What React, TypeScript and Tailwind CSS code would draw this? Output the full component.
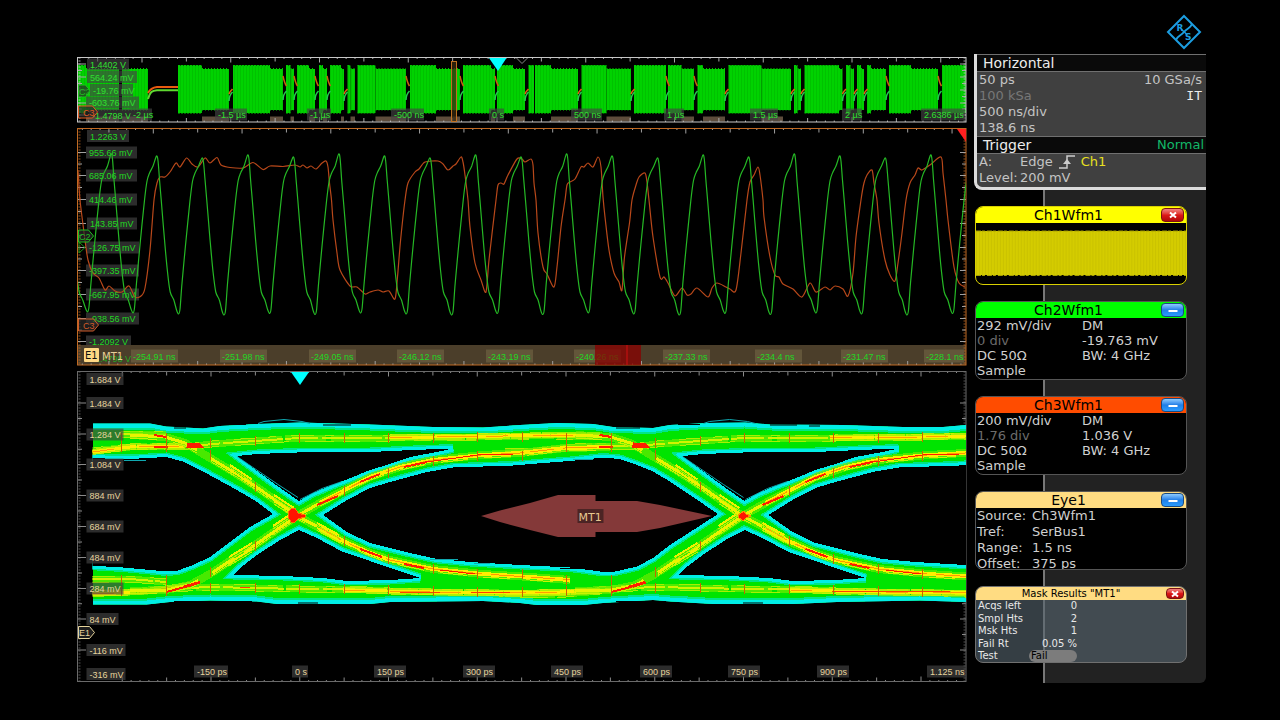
import type { ReactNode } from "react";

type Point = [number, number];

const toPath = (pts: Point[]) => "M" + pts.map(([x, y]) => `${x} ${y}`).join("L");
const shift = (pts: Point[], dx: number, dy = 0): Point[] => pts.map(([x, y]) => [x + dx, y + dy]);

/* Catmull-Rom spline through the points, as cubic segments. */
const toCurve = (pts: Point[]) => {
  let d = `M${pts[0][0]} ${pts[0][1]}`;
  for (let i = 0; i < pts.length - 1; i++) {
    const p0 = pts[Math.max(i - 1, 0)];
    const p1 = pts[i];
    const p2 = pts[i + 1];
    const p3 = pts[Math.min(i + 2, pts.length - 1)];
    const c = [p1[0] + (p2[0] - p0[0]) / 7, p1[1] + (p2[1] - p0[1]) / 7, p2[0] - (p3[0] - p1[0]) / 7, p2[1] - (p3[1] - p1[1]) / 7];
    d += `C${c.map((v) => v.toFixed(1)).join(" ")} ${p2[0]} ${p2[1]}`;
  }
  return d;
};

/* ---------- shared plot pieces ---------- */

function AxisLabel({ x, y, w, text, color }: { x: number; y: number; w: number; text: string; color: string }) {
  return (
    <g>
      <rect x={x - 3} y={y - 6} width={w} height={12} fill="#444444" fillOpacity={0.65} />
      <text x={x} y={y + 3.5} fill={color} className="font-['Liberation_Sans',sans-serif] text-[9px]">
        {text}
      </text>
    </g>
  );
}

type FrameProps = { top: number; bottom: number; color: string; tick: string; first: number; major: number[] };

function Frame({ top, bottom, color, tick, first, major }: FrameProps) {
  const step = 88.75;
  const minor: ReactNode[] = [];
  for (let i = -10; i < 110; i++) {
    const x = first + (i * step) / 10;
    if (x < 80 || x > 964) continue;
    const len = i % 10 === 0 ? 5 : i % 5 === 0 ? 4 : 1.5;
    minor.push(<path key={i} d={`M${x} ${top}v${len}M${x} ${bottom}v${-len}`} stroke={tick} />);
  }
  return (
    <g fill="none" strokeWidth={1}>
      {minor}
      <path d={`M79.500 ${top}V${bottom}M964.500 ${top}V${bottom}`} stroke={color} strokeWidth={2} strokeDasharray="1 2" opacity={0.8} />
      {major.map((y) => (
        <path key={y} d={`M78 ${y}h8M966 ${y}h-6`} stroke={tick} />
      ))}
      {major.slice(1).map((y, i) => (
        <path key={y} d={`M78 ${(y + major[i]) / 2}h4M966 ${(y + major[i]) / 2}h-4`} stroke={tick} />
      ))}
      <rect x={77.5} y={top} width={888.5} height={bottom - top} stroke={color} />
    </g>
  );
}

function Tag({ y, w, text, color }: { y: number; w: number; text: string; color: string }) {
  return (
    <g>
      <path d={`M78.500 ${y - 6}h${w - 5}l5 6l-5 6h${5 - w}z`} fill="#2a2a2a" fillOpacity={0.7} stroke={color} />
      <text x={w > 16 ? 83 : 79} y={y + 3.5} fill={color} className="font-['Liberation_Sans',sans-serif] text-[9px]">
        {text}
      </text>
    </g>
  );
}

/* ---------- acquisition overview ---------- */

const TALL: Point[] = [
  [78, 86], [178, 202], [233, 270], [286, 290.5], [297, 309], [319, 323], [330, 341], [347.5, 350.5],
  [357.500, 375.5], [410, 436], [463, 491], [497, 513], [528.5, 534], [535, 551], [581.5, 606.5], [634, 666],
  [668, 681.5], [697.5, 703], [728.5, 761.5], [794, 797.5], [804.5, 839], [846, 850.5], [857, 861],
  [867, 871], [889, 911], [942, 966],
];
const SHORT: Point[] = [
  [86, 119], [122, 148], [202, 229], [270, 283], [290.5, 294], [309, 315], [323, 327], [341, 344],
  [350.5, 355], [375.5, 406], [436, 460], [491, 495], [513, 525], [551, 578], [606.5, 631], [681.5, 694],
  [703, 725], [761.5, 791], [797.5, 801], [839, 842.5], [850.5, 854], [861, 864], [871, 886], [911, 938],
];
const FALLS = [283, 294, 315, 327, 406, 460, 495, 666, 694, 886, 938];
const RISES = [229, 344, 525, 578, 631, 725, 791, 801, 842.5, 854, 864];

const OVERVIEW_TIMES: [string, number, number][] = [
  ["-2 µs", 133, 22], ["-1.5 µs", 218, 32], ["-1 µs", 310, 24], ["-500 ns", 394, 33], ["0 s", 492, 15],
  ["500 ns", 574, 31], ["1 µs", 667, 20], ["1.5 µs", 753, 28], ["2 µs", 845, 20], ["2.6386 µs", 924, 44],
];

function OverviewPlot() {
  const green = "#2fe02f";
  return (
    <svg viewBox="77 56 890 67" className="block w-full" role="img" aria-label="Acquisition overview">
      <defs>
        <pattern id="burst" width="3" height="10" patternUnits="userSpaceOnUse">
          <rect width="3" height="10" fill="#00d200" />
          <rect width="1" height="10" fill="#00c200" />
        </pattern>
      </defs>
      {SHORT.filter(([a]) => a < 783).map(([a, b]) => (
        <rect key={a} x={a} y={116.5} width={Math.min(b, 783) - a} height={5} fill="#5e4d3c" />
      ))}
      {TALL.map(([a, b]) => (
        <g key={a}>
          <rect x={a} y={65.5} width={b - a} height={47.5} fill="url(#burst)" />
          <path d={`M${a} 65.500H${b}M${a} 113H${b}`} stroke="#00c800" strokeDasharray="2 1" />
        </g>
      ))}
      {SHORT.map(([a, b]) => (
        <g key={a}>
          <rect x={a} y={69} width={b - a} height={41} fill="url(#burst)" />
          <path d={`M${a} 68.500H${b}M${a} 110H${b}`} stroke="#00c800" strokeDasharray="1 2" />
        </g>
      ))}
      <g fill="none" strokeWidth={1.5}>
        <path d="M148 93c2-4 4-5.500 9-6h21" stroke="#e85a10" strokeWidth={2} />
        <path d="M148 99c2-7 4-8.500 9-8.800h21" stroke="#5fd930" strokeWidth={2} />
        {FALLS.map((x) => (
          <g key={x}>
            <path d={`M${x} 76c1 5 1.500 7 3.500 10`} stroke="#c86010" />
            <path d={`M${x} 100c0-5 1.500-7 3.500-9`} stroke="#25c850" />
          </g>
        ))}
        {RISES.map((x) => (
          <g key={x}>
            <path d={`M${x} 94c1-3 2-3 3.500-5`} stroke="#e06010" />
            <path d={`M${x} 101c0-5 1.500-7 3.500-9`} stroke="#25c850" />
          </g>
        ))}
      </g>
      <Frame top={57.5} bottom={122} color="#c8c8c8" tick="#a8a8a8" first={142} major={[64, 77, 90, 103, 115]} />
      <path d="M516.500 58l5.500 5.500l5.500-5.500" fill="none" stroke="#888888" />
      <path d="M489 58h17.500l-8.500 13z" fill="#00ffff" />
      <rect x={451.5} y={61.5} width={5} height={60} fill="#3a2a10" fillOpacity={0.75} stroke="#c07020" />
      <Tag y={91} w={12} text="C2" color="#1fbf1f" />
      <AxisLabel x={90} y={64.5} w={42} text="1.4402 V" color={green} />
      <AxisLabel x={90} y={77} w={50} text="564.24 mV" color={green} />
      <AxisLabel x={93} y={90} w={43} text="-19.76 mV" color={green} />
      <AxisLabel x={89} y={102.5} w={53} text="-603.76 mV" color={green} />
      <AxisLabel x={92} y={115} w={41} text="-1.4798 V" color={green} />
      <Tag y={112} w={19} text="C3" color="#e05a20" />
      {OVERVIEW_TIMES.map(([t, x, w]) => (
        <AxisLabel key={t} x={x} y={114.5} w={w} text={t} color={green} />
      ))}
    </svg>
  );
}

/* ---------- zoomed waveform ---------- */

const CLOCK_CYCLE: Point[] = [
  [-12, 200], [-9.500, 181], [-7, 173], [-3.5, 166], [0, 156], [1.5, 161], [3, 180], [4.7, 200], [8, 240],
  [11, 272], [13.7, 292], [17.3, 300], [20, 310], [22, 314], [23.5, 309], [25.5, 283], [29, 245],
];
const CLOCK: Point[] = Array.from({ length: 21 }, (_, i) => i - 1).flatMap((i) => {
  const wobble = ((i * 7) % 5) - 2;
  return CLOCK_CYCLE.map(([x, y]): Point => [111 + 45.53 * i + x, y < 165 ? y + wobble : y > 305 ? y + wobble / 2 : y]);
});

const DATA: Point[] = [
  [78, 170], [80, 200], [85, 240], [88, 260], [93, 273], [99, 278], [105, 290], [109, 286], [115, 291],
  [122, 292], [129, 286], [135, 297], [141, 296], [145, 288], [150, 250], [154, 200], [157, 183], [160, 177],
  [165, 177], [170, 172], [176, 163], [180, 167], [186.5, 158], [192, 164], [198, 167], [205, 158],
  [210, 163], [217, 157.500], [221, 165], [230, 167.5], [243, 168], [253, 162.5], [263, 169.5], [270, 166],
  [283, 166.5], [295, 165], [300, 167], [303, 165], [307, 168], [311, 166], [316, 169], [322, 163],
  [326, 161], [328, 167], [329.5, 183], [331.5, 200], [333, 220], [337, 253], [340, 270], [350, 286],
  [357, 287], [365, 294], [370, 292], [378, 290], [383, 292], [389, 291], [395, 299], [397.5, 277],
  [400.6, 240], [405, 200], [408, 183], [415, 172], [419, 169], [425, 162], [438, 161], [443, 164],
  [448, 170], [453, 166], [456, 164], [461, 157], [463, 162], [465, 175], [468, 200], [470, 227],
  [475, 263], [481, 280], [486, 292], [489, 260], [496, 200], [498, 185], [501, 183], [504, 184],
  [508, 175], [517, 159], [522, 159], [525, 162], [531, 159], [533, 165], [534, 183], [536, 200],
  [538, 233], [543, 267], [547, 274], [554, 287], [557, 267], [561, 227], [565, 200], [567, 185],
  [570, 182], [575, 179], [581, 167], [584, 167], [588, 163], [593, 167], [598, 157], [601, 167],
  [603, 197], [605, 217], [609, 250], [614, 273], [619, 282], [622, 290], [624.5, 257], [629.5, 223],
  [632, 200], [636, 185], [639, 177], [645, 173], [647, 182], [649, 200], [653, 237], [660, 277],
  [664, 277], [668, 283], [675, 296], [682, 288], [687, 295], [691, 294], [697, 288], [708, 297],
  [712, 288], [717, 283], [726, 287], [730, 289], [736, 290], [741, 253], [747, 200], [750, 182],
  [754, 175], [758, 167], [760, 175], [763, 200], [764, 217], [770, 257], [775, 275], [779, 277],
  [783, 284], [793, 289], [802, 297], [810, 283], [816, 292], [825, 287], [830, 290], [835, 286],
  [843, 289], [848, 296], [853, 273], [856, 237], [861, 200], [864, 183], [867, 175], [872, 170],
  [874, 183], [877, 200], [879, 223], [885, 260], [890, 275], [895, 281], [898, 263], [902, 233],
  [906, 200], [910, 183], [915, 175], [918, 168], [922, 170], [930, 165], [941, 157], [943, 173],
  [946, 200], [948, 220], [954, 267], [959, 283], [965, 287],
];

const ZOOM_LEVELS: [string, number, number, number][] = [
  ["1.2263 V", 90, 136, 42], ["955.66 mV", 89, 152.5, 51], ["685.06 mV", 89, 175.5, 51],
  ["414.46 mV", 89, 199.5, 51], ["143.85 mV", 90, 223.5, 50], ["-126.75 mV", 89, 247.5, 53],
  ["-397.35 mV", 89, 270.5, 53], ["-667.95 mV", 89, 294.5, 53], ["-938.56 mV", 89, 318.5, 53],
  ["-1.2092 V", 89, 341.5, 45],
];
const ZOOM_TIMES: [string, number][] = [
  ["-254.91 ns", 133], ["-251.98 ns", 222], ["-249.05 ns", 311], ["-246.12 ns", 399], ["-243.19 ns", 488],
  ["-240.26 ns", 576], ["-237.33 ns", 665], ["-234.4 ns", 757], ["-231.47 ns", 843], ["-228.1 ns", 926],
];

function ZoomPlot() {
  const green = "#22d822";
  return (
    <svg viewBox="77 127 890 239" className="block w-full" role="img" aria-label="Zoomed waveforms of channels 2 and 3">
      <defs>
        <clipPath id="zoomArea">
          <rect x="78" y="129" width="888" height="236" />
        </clipPath>
      </defs>
      {ZOOM_LEVELS.map(([t, x, y, w]) => (
        <AxisLabel key={t} x={x} y={y} w={w} text={t} color={green} />
      ))}
      <rect x={78} y={345} width={888} height={20} fill="#4b3e2a" />
      <text x={92} y={362} fill="#22a822" className="font-['Liberation_Sans',sans-serif] text-[9px]">-1.4798 V</text>
      <Frame
        top={128.5}
        bottom={365}
        color="#c06a24"
        tick="#a0a0a0"
        first={153.3}
        major={[152.5, 175.5, 199.5, 223.5, 247.5, 270.5, 294.5, 318.5, 341.5]}
      />
      <g clipPath="url(#zoomArea)" fill="none" strokeLinejoin="round">
        <path d={toCurve(DATA)} stroke="#b8481a" strokeWidth={1.2} />
        <path d={toCurve(CLOCK)} stroke="#25b825" strokeWidth={1.2} />
        <path d="M957 129h9v13z" fill="#ff2020" />
      </g>
      <path d="M79 242v11l6-5.500z" fill="none" stroke="#159015" />
      <Tag y={236} w={15} text="C2" color="#1fbf1f" />
      <Tag y={325} w={20} text="C3" color="#d05a28" />
      {ZOOM_TIMES.map(([t, x]) => (
        <g key={t}>
          <rect x={x - 2} y={349.5} width={Math.min(47, 966 - x)} height={13} fill="#63563a" />
          <text x={x} y={359.500} fill={green} className="font-['Liberation_Sans',sans-serif] text-[9px]">{t}</text>
        </g>
      ))}
      <rect x={595} y={345} width={46} height={20} fill="#880000" fillOpacity={0.75} />
      <path d="M627 345v20" stroke="#d01010" />
      <rect x={84} y={348} width={15} height={14} rx={1} fill="#ffd884" />
      <text x={85} y={359} fill="#101010" className="font-['DejaVu_Sans',sans-serif] text-[10px]">E1</text>
      <text x={102} y={359.500} fill="#e8cf98" className="font-['DejaVu_Sans',sans-serif] text-[10px]">MT1</text>
    </svg>
  );
}

/* ---------- eye diagram ---------- */

const UI = 445.5;

const EYE_OUTLINE: Point[] = [
  [92.5, 423.5], [150, 423.5], [166, 426.5], [203, 428.5], [220, 426], [257, 424], [300, 422.5], [370, 424.500],
  [433, 427], [483, 427.5], [520, 425], [557, 423], [593, 424], [613, 427], [653, 428], [670, 425],
  [707, 423], [745, 422.500], [770, 424.5], [843, 425], [903, 427], [943, 427], [966, 425],
  [966, 602], [920, 600.5], [837, 602], [793, 604], [713, 604], [670, 601.5], [653, 600], [603, 603],
  [583, 605], [537, 605], [520, 603], [483, 601], [390, 602], [370, 604], [277, 604], [257, 601.5],
  [210, 600.5], [170, 602], [147, 604.5], [92.5, 604.5],
];
const TOP_EDGE = EYE_OUTLINE.slice(0, 23);
const BOTTOM_EDGE = EYE_OUTLINE.slice(23);

const LEFT_HOLE: Point[] = [
  [80, 458], [130, 459], [166, 457], [183, 461.5], [203, 471.5], [237, 490], [257, 502], [273, 514],
  [250, 527], [230, 542], [210, 557], [193, 565], [178, 570.5], [167, 571.5], [123, 567.5], [80, 565],
];
const TOP_HOLE: Point[] = [
  [237, 456], [257, 454], [297, 452.5], [370, 452], [413, 450], [453, 448.5], [437, 452], [410, 457],
  [390, 464], [370, 470], [353, 477], [330, 486], [313, 493], [299, 501], [283, 490], [257, 471],
];
const BOTTOM_HOLE: Point[] = [
  [299, 530], [317, 538], [343, 552], [370, 561], [390, 568], [420, 578], [390, 580], [347, 581],
  [323, 578], [283, 576], [233, 575], [240, 568], [257, 555], [280, 540],
];
const MAIN_HOLE: Point[] = [
  [323, 515], [347, 500], [370, 488], [390, 482], [427, 472], [453, 467.5], [513, 465.5], [543, 463],
  [570, 461], [603, 457.5], [620, 459], [637, 465], [653, 471.5], [670, 481.5], [690, 495], [718, 514],
  [687, 534], [670, 545], [653, 558], [637, 566.5], [613, 572], [600, 571.5], [570, 567.5], [520, 565],
  [470, 562], [437, 559], [410, 553], [390, 548], [370, 543], [347, 532],
];
const HOLES: Point[][] = [
  LEFT_HOLE, TOP_HOLE, BOTTOM_HOLE, MAIN_HOLE, shift(TOP_HOLE, UI), shift(BOTTOM_HOLE, UI), shift(MAIN_HOLE, UI),
];

const FALLING: Point[] = [
  [130, 435], [165, 437], [185, 443], [205, 455], [230, 470], [255, 486], [275, 500], [297, 516], [320, 528],
  [343, 541], [370, 553], [390, 560], [433, 569], [483, 574], [530, 577], [570, 580],
];
const RISING: Point[] = [
  [130, 591], [166, 590], [190, 585], [210, 574], [230, 561], [255, 545], [275, 531], [297, 516], [320, 503],
  [343, 491], [370, 477], [400, 467], [433, 460], [483, 455], [520, 453], [565, 448], [610, 447],
];
const HIGH: Point[] = [
  [60, 452], [92, 451], [130, 447], [166, 446], [195, 446], [212, 444], [255, 441], [299, 438], [340, 438],
  [390, 438], [433, 437], [477, 437], [530, 436], [566, 436], [600, 436],
];
const LOW: Point[] = [
  [60, 594], [92, 593], [130, 592], [166, 589], [210, 587], [255, 588], [300, 589], [343, 589], [390, 591],
  [433, 592], [477, 592], [520, 594], [566, 594], [600, 591],
];
const TRANSITIONS: Point[][] = [FALLING, RISING, shift(FALLING, UI), shift(RISING, UI)];
const RAILS: Point[][] = [
  HIGH, LOW, shift(HIGH, UI), shift(LOW, UI), [[120, 434], [166, 435]], [[92, 579], [130, 579], [166, 582]],
];
const WARM_RAILS: Point[][] = [
  [[390, 437.5], [477, 436.5], [530, 435.5], [600, 435]],
  [[343, 590], [433, 592], [520, 593], [600, 591]],
  [[830, 438], [922, 437], [966, 436]],
  [[790, 590], [880, 592], [966, 593]],
  [[92, 452], [130, 447], [185, 446]],
  [[92, 594], [140, 592], [190, 585]],
];

const HOT: Point[][] = [
  [[360, 482], [380, 474]], [[404, 467], [427, 462]], [[427, 462], [477, 455], [514, 454]],
  [[360, 549], [382, 557]], [[404, 564], [424, 568]], [[440, 570], [475, 574]],
  [[154, 435], [166, 437]], [[154, 447.500], [168, 446.5]],
  [[166, 592], [185, 587], [200, 582]], [[317, 505], [338, 496]],
];
const TICK_XS = Array.from({ length: 19 }, (_, i) => 121.5 + 44.5 * i);

const railAt = (x: number): number[] => {
  const u = x > 560 ? x - UI : x;
  if (u < 180) return [438, 447, 580, 591];
  if (u < 230) return [443, 455, 572, 588];
  if (u < 280) return [441, 487, 546, 588];
  if (u < 320) return [438, 589];
  if (u < 365) return [438, 491, 541, 589];
  if (u < 410) return [438, 473, 559, 590];
  if (u < 455) return [438, 461, 569, 591];
  return [437, 456, 574, 592];
};

const EYE_LEVELS: [string, number, number][] = [
  ["1.684 V", 379, 37], ["1.484 V", 403, 37], ["1.284 V", 434.5, 37], ["1.084 V", 464.5, 37],
  ["884 mV", 495.500, 37], ["684 mV", 526.5, 37], ["484 mV", 557.5, 37], ["284 mV", 588.5, 37],
  ["84 mV", 619, 32], ["-116 mV", 650, 39], ["-316 mV", 674, 39],
];
const EYE_TIMES: [string, number, number][] = [
  ["-150 ps", 197, 34], ["0 s", 295, 16], ["150 ps", 377, 32], ["300 ps", 466, 32], ["450 ps", 554, 32],
  ["600 ps", 643, 32], ["750 ps", 731, 32], ["900 ps", 820, 32], ["1.125 ns", 930, 38],
];

function EyePlot() {
  const cream = "#e6d49c";
  return (
    <svg viewBox="77 370 890 313" className="block w-full" role="img" aria-label="Eye diagram with mask test MT1">
      <defs>
        <clipPath id="eyeShape">
          <path d={toPath(EYE_OUTLINE) + "Z"} />
        </clipPath>
      </defs>
      <Frame
        top={371.5}
        bottom={681.5}
        color="#6a6a6a"
        tick="#8a8a8a"
        first={211}
        major={[403, 434, 464.5, 495.5, 526.5, 557.5, 588.5, 619, 650]}
      />
      <g clipPath="url(#eyeShape)" shapeRendering="crispEdges">
        <path d={toPath(EYE_OUTLINE) + "Z"} fill="#00e400" />
        <g fill="none" stroke="#00e688" strokeWidth={12}>
          <path d={toPath(TOP_EDGE)} />
          <path d={toPath(BOTTOM_EDGE)} />
          {HOLES.map((h, i) => (
            <path key={i} d={toPath(h) + "Z"} strokeWidth={9} />
          ))}
        </g>
        <g fill="none" stroke="#00eee6" strokeWidth={8}>
          <path d={toPath(TOP_EDGE)} />
          <path d={toPath(BOTTOM_EDGE)} />
          {HOLES.map((h, i) => (
            <path key={i} d={toPath(h) + "Z"} strokeWidth={6} />
          ))}
        </g>
        <g fill="none">
          {RAILS.map((t, i) => (
            <g key={i}>
              <path d={toPath(t)} stroke="#70ec00" strokeWidth={7} strokeDasharray="87 3 41 5" opacity={0.7} />
              <path d={toPath(t)} stroke="#d0f400" strokeWidth={2} strokeDasharray="61 2 33 4 60 3" />
              <path d={toPath(shift(t, 0, 3))} stroke="#a8f000" strokeWidth={1} strokeDasharray="17 16 29 9" />
              <path d={toPath(shift(t, 0, -3))} stroke="#a8f000" strokeWidth={1} strokeDasharray="23 11 9 15" />
            </g>
          ))}
          {WARM_RAILS.map((t, i) => (
            <g key={i}>
              <path d={toPath(t)} stroke="#d8f400" strokeWidth={6} strokeDasharray="44 1 30 1" opacity={0.7} />
              <path d={toPath(t)} stroke="#ffee00" strokeWidth={3} strokeDasharray="44 1 70 1" />
              <path d={toPath(t)} stroke="#ffa000" strokeWidth={1} strokeDasharray="22 25 40 9" />
            </g>
          ))}
          {TRANSITIONS.map((t, i) => (
            <g key={i}>
              <path d={toPath(t)} stroke="#78ec00" strokeWidth={8} opacity={0.6} />
              <path d={toPath(t)} stroke="#e8f400" strokeWidth={3} strokeDasharray="70 16 26 12 60 8 20 6" />
              <path d={toPath(shift(t, 0, 3))} stroke="#c8f400" strokeWidth={1} strokeDasharray="27 16" />
              <path d={toPath(t.slice(8))} stroke="#ffee00" strokeWidth={4} />
              <path d={toPath(t.slice(8))} stroke="#ff9800" strokeWidth={1} strokeDasharray="24 9 34 6" />
            </g>
          ))}
          {[0, UI].map((dx) => (
            <g key={dx}>
              {HOT.map((h, i) => (
                <path key={i} d={toPath(shift(h, dx))} stroke="#ff1c00" strokeWidth={i === 2 || i === 5 ? 1 : 2} />
              ))}
              {[0, 1, 2, 3].map((k) => (
                <path
                  key={k}
                  d={`M${230 + dx} ${465 + k * 2.5}l22 14.500M${274 + dx} ${495 + k * 3}l20 13M${229 + dx} ${557 + k * 3}l23-14M${273 + dx} ${526 + k * 3}l21-14M${317 + dx} ${523 + k * 2.5}l22 12`}
                  stroke={k % 2 ? "#b8f000" : "#f0f000"}
                  strokeWidth={k % 2 ? 1 : 2}
                />
              ))}
              <path d={`M${188 + dx} 443l12 1l3 3h-16z`} fill="#ff1c00" stroke="#ff1c00" />
              <path d={`M${184 + dx} 586l14-4l2 1l-12 4z`} fill="#ff1c00" stroke="#ff1c00" />
            </g>
          ))}
          <path d="M288 512l4-4h3l3 5l7 2v2l-7 2l-3 3h-4l-3-5z" fill="#ff1400" stroke="#ff7000" />
          <path d="M738 515l6-4l2 3l5 2l-5 2l-3 3l-5-4z" fill="#ff1400" stroke="#ff9000" />
          {[[400, 592, 440, 592], [470, 592, 510, 593], [832, 591, 950, 592], [240, 587, 250, 587]].map(([a, b, c, d]) => (
            <path key={a} d={`M${a} ${b}L${c} ${d}`} stroke="#ff4000" strokeWidth={1} />
          ))}
          {TICK_XS.flatMap((x) =>
            railAt(x).map((y) => <path key={`${x}-${y}`} d={`M${x} ${y - 5}v10`} stroke="#c86400" />)
          )}
        </g>
      </g>
      {HOLES.map((h, i) => (
        <path key={i} d={toPath(h) + "Z"} fill="#000000" clipPath="url(#eyeShape)" shapeRendering="crispEdges" />
      ))}
      <g fill="none" stroke="#10a8b0" strokeWidth={1}>
        {[0, UI].map((dx) => (
          <g key={dx}>
            <path d={`M${237 + dx} 456.500l41 28l20 13M${300 + dx} 499.500l22-11l20-7`} />
            <path d={`M${258 + dx} 423.500l6-2l20-2l18 2l8 2`} />
          </g>
        ))}
        <path d="M124 460.500h22M573 459.500h20M430 559.500h28M474 563.500h16" />
      </g>
      <g stroke="#000000" strokeWidth={1}>
        <path d="M174 428h12M230 424.500h16M323 425h28M616 428h24M678 424.500h22M770 425h27M809 426h11M174 601.500h36M231 601.500h21M298 603h20M616 601.500h50M743 603h20M560 568.500h24" />
      </g>
      <path
        d="M481 516L500 510.500L530 503L558 495H595.500V501H637L660 505L712 516L660 528L637 532H595.500V537H558L530 530L500 522Z"
        fill="#843939"
      />
      <rect x={577.5} y={509} width={26} height={14} fill="#4c2424" />
      <text x={578.5} y={520.5} fill="#e8c890" className="font-['DejaVu_Sans',sans-serif] text-[11px]">MT1</text>
      <path d="M291 372h18l-9 13z" fill="#00ffff" />
      {EYE_LEVELS.map(([t, y, w]) => (
        <AxisLabel key={t} x={89.5} y={y} w={w} text={t} color={cream} />
      ))}
      {EYE_TIMES.map(([t, x, w]) => (
        <AxisLabel key={t} x={x} y={671.5} w={w} text={t} color={cream} />
      ))}
      <Tag y={632.5} w={16} text="E1" color={cream} />
    </svg>
  );
}

/* ---------- side panel ---------- */

function Logo() {
  return (
    <svg width="36" height="36" viewBox="0 0 36 36" role="img" aria-label="Rohde and Schwarz" fill="none" stroke="#1c9de0">
      <path d="M18 2L34 18L18 34L2 18Z" strokeWidth="2" />
      <path d="M10 26C12 21 15 22 18 18S24 15 26 10" strokeWidth="2" />
      <path d="M15.500 15.500L21 20.500" strokeWidth="1.500" />
      <text x="10.500" y="16.500" fill="#1c9de0" stroke="none" className="font-['DejaVu_Sans',sans-serif] text-[9px] font-bold">R</text>
      <text x="19" y="26" fill="#1c9de0" stroke="none" className="font-['DejaVu_Sans',sans-serif] text-[9px] font-bold">S</text>
    </svg>
  );
}

function CardButton({ kind, label, small }: { kind: "close" | "minimize"; label: string; small?: boolean }) {
  const tone =
    kind === "close"
      ? "border-[#7a1212] bg-linear-to-b from-[#f08080] via-[#dd1818] to-[#b00808]"
      : "border-[#1a4a80] bg-linear-to-b from-[#8ccbff] via-[#1f7ee6] to-[#2a9cff]";
  const size = small ? "h-[11px] w-[18px]" : "h-[14px] w-[23px]";
  return (
    <button type="button" aria-label={label} className={`flex shrink-0 items-center justify-center rounded-[4px] border ${tone} ${size}`}>
      <svg width="10" height="8" viewBox="0 0 10 8" stroke="#ffffff" strokeWidth="2" aria-hidden="true">
        {kind === "close" ? <path d="M2 1.500l6 5M8 1.500l-6 5" /> : <path d="M0.500 5h9" />}
      </svg>
    </button>
  );
}

type CardProps = { title: string; head: string; border: string; kind: "close" | "minimize"; children: ReactNode };

function Card({ title, head, border, kind, children }: CardProps) {
  return (
    <section className={`flex h-[79px] flex-col overflow-hidden rounded-lg border bg-black ${border}`}>
      <header className={`flex h-4 shrink-0 items-center pr-0.5 text-black ${head}`}>
        <h2 className="flex-1 text-center text-sm leading-4">{title}</h2>
        <CardButton kind={kind} label={`${kind === "close" ? "Close" : "Minimize"} ${title}`} />
      </header>
      {children}
    </section>
  );
}

function ChannelBody({ scale, position, offset }: { scale: string; position: string; offset: string }) {
  return (
    <div className="grid grid-cols-[105px_1fr] px-px text-[13px] leading-[15px] text-[#d0d0d0]">
      <span>{scale}</span>
      <span>DM</span>
      <span className="text-[#6c6c6c]">{position}</span>
      <span>{offset}</span>
      <span>DC 50Ω</span>
      <span>BW: 4 GHz</span>
      <span>Sample</span>
    </div>
  );
}

const EYE_SETTINGS = [["Source:", "Ch3Wfm1"], ["Tref:", "SerBus1"], ["Range:", "1.5 ns"], ["Offset:", "375 ps"]];
const MASK_RESULTS = [["Acqs left", "0"], ["Smpl Hts", "2"], ["Msk Hts", "1"], ["Fail Rt", "0.05 %"]];

function Sidebar() {
  return (
    <aside className="flex w-[232px] shrink-0 flex-col rounded-br-md bg-[linear-gradient(90deg,#000_69px,#777_69px,#777_71px,#222_71px)] font-['DejaVu_Sans',sans-serif]">
      <section className="overflow-hidden rounded-bl-lg border-b-3 border-l-3 border-[#dcdcdc] bg-[#404040] text-[13px] leading-4 text-[#c4c4c4]">
        <h2 className="border-y border-[#707070] bg-[#0a0a0a] pl-1.5 text-sm leading-4 text-[#ececec]">Horizontal</h2>
        <div className="flex justify-between pr-1 pl-0.5">
          <div>
            <p>50 ps</p>
            <p className="text-[#777777]">100 kSa</p>
            <p>500 ns/div</p>
            <p>138.6 ns</p>
          </div>
          <div className="text-right">
            <p>10 GSa/s</p>
            <p className="font-['DejaVu_Sans_Mono',monospace] text-[#ececec]">IT</p>
          </div>
        </div>
        <div className="flex justify-between border-y border-[#707070] bg-[#0a0a0a] pr-0.5 pl-1.5">
          <h2 className="text-sm leading-4 text-[#ececec]">Trigger</h2>
          <span className="text-[#12b868]">Normal</span>
        </div>
        <div className="grid grid-cols-[41px_1fr] pb-px pl-0.5">
          <span>A:</span>
          <span className="flex items-center">
            Edge
            <svg width="16" height="14" viewBox="0 0 16 14" className="mx-1.5" fill="none" stroke="#cccccc" strokeWidth="1.500" aria-label="rising">
              <path d="M0 13h8V1h8" />
              <path d="M4 9l4-5l4 5z" fill="#cccccc" stroke="none" />
            </svg>
            <span className="text-[#e8e020]">Ch1</span>
          </span>
          <span>Level:</span>
          <span>200 mV</span>
        </div>
      </section>

      <div className="mt-4 mb-5 ml-px flex w-[212px] flex-col gap-4">
        <Card title="Ch1Wfm1" head="bg-[#ffff00]" border="border-[#d8d000]" kind="close">
          <svg viewBox="0 0 211 61" preserveAspectRatio="none" className="min-h-0 flex-1" role="img" aria-label="Channel 1 preview">
            <defs>
              <pattern id="ch1" width="3" height="10" patternUnits="userSpaceOnUse">
                <rect width="3" height="10" fill="#d4cc00" />
                <rect width="1" height="10" fill="#cac200" />
              </pattern>
            </defs>
            <rect y="8" width="211" height="44" fill="url(#ch1)" />
            <path d="M0 8h211M0 52.500h211" stroke="#a8a000" strokeDasharray="5 1 3 2" />
          </svg>
        </Card>
        <Card title="Ch2Wfm1" head="bg-[#00ff00]" border="border-[#555555]" kind="minimize">
          <ChannelBody scale="292 mV/div" position="0 div" offset="-19.763 mV" />
        </Card>
        <Card title="Ch3Wfm1" head="bg-[#ff4c00]" border="border-[#555555]" kind="minimize">
          <ChannelBody scale="200 mV/div" position="1.76 div" offset="1.036 V" />
        </Card>
        <Card title="Eye1" head="bg-[#ffdc82]" border="border-[#555555]" kind="minimize">
          <dl className="px-px text-[13px] leading-4 text-[#d0d0d0]">
            {EYE_SETTINGS.map(([k, v]) => (
              <div key={k} className="grid grid-cols-[55px_1fr]">
                <dt>{k}</dt>
                <dd>{v}</dd>
              </div>
            ))}
          </dl>
        </Card>
        <section className="overflow-hidden rounded-lg border border-[#707070] bg-[rgb(88_103_113/0.6)] text-[10px] text-[#e8e8e8]">
          <header className="flex h-[13px] items-center bg-[#ffdc82] pr-0.5 text-black">
            <h2 className="flex-1 text-center leading-3">Mask Results "MT1"</h2>
            <CardButton kind="close" label="Close mask results" small />
          </header>
          <dl className="flex h-[62px] w-[101px] flex-col justify-between pl-0.5 leading-3">
            {MASK_RESULTS.map(([k, v]) => (
              <div key={k} className="flex justify-between">
                <dt>{k}</dt>
                <dd>{v}</dd>
              </div>
            ))}
            <div className="flex justify-between">
              <dt>Test</dt>
              <dd className="w-[48px] rounded-full bg-[#7c7c7c] pl-0.5 text-black">Fail</dd>
            </div>
          </dl>
        </section>
      </div>
    </aside>
  );
}

export default function App() {
  return (
    <div className="min-h-screen bg-black pr-[74px] pb-8 pl-[77px]">
      <header className="flex justify-end pt-3.5 pr-1 pb-1">
        <Logo />
      </header>
      <main className="flex items-start gap-[7px]">
        <div className="flex min-w-0 flex-1 flex-col gap-1 pt-0.5">
          <OverviewPlot />
          <ZoomPlot />
          <EyePlot />
        </div>
        <Sidebar />
      </main>
    </div>
  );
}
